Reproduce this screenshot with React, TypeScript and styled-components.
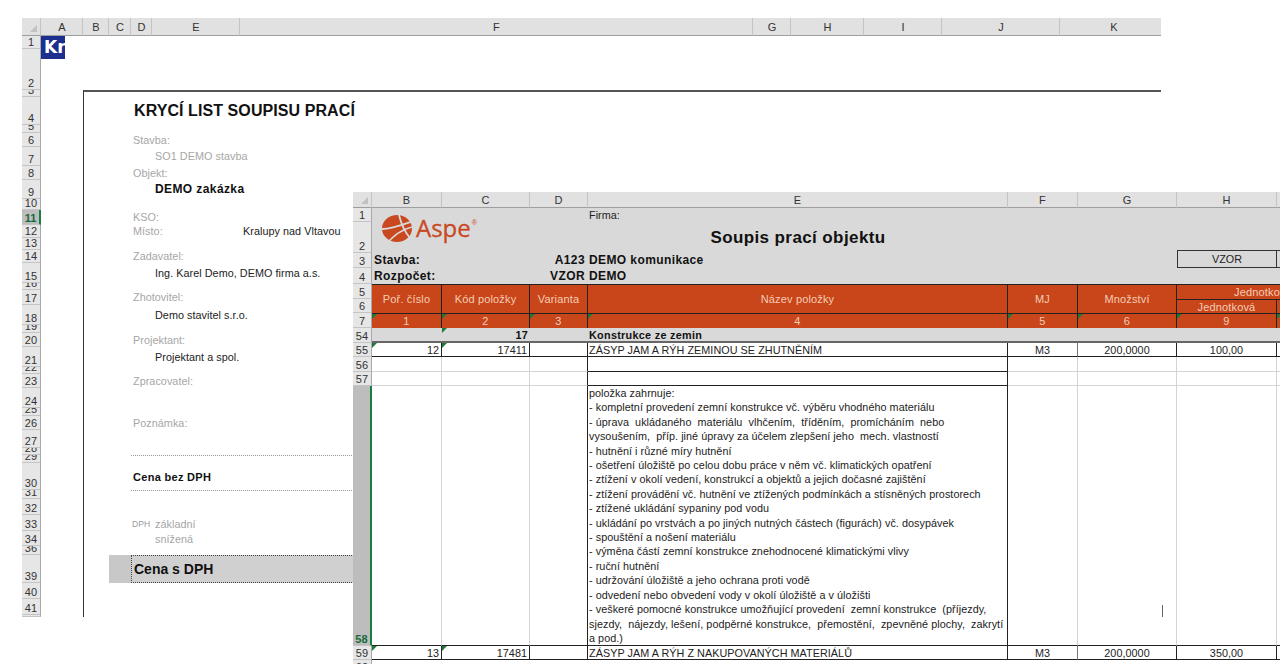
import React from 'react';
import styled, { createGlobalStyle, css } from 'styled-components';

const GlobalStyle = createGlobalStyle`
  html, body {
    margin: 0;
    padding: 0;
    height: 664px;
    overflow: hidden;
    background: #fff;
  }
  body {
    font-family: "Liberation Sans", Arial, sans-serif;
    font-size: 10.8px;
    letter-spacing: 0.05px;
  }
`;

interface Place {
  $col: number | string;
  $row: number | string;
}

const placed = css<Place>`
  grid-column: ${(p) => p.$col};
  grid-row: ${(p) => p.$row};
`;

const BLACK = '#222';
const GRID = '#d4d4d4';

/* ---------- shared sheet chrome ---------- */

const ColHead = styled.div<{ $col: number }>`
  grid-column: ${(p) => p.$col};
  grid-row: 1;
  box-sizing: border-box;
  display: flex;
  align-items: center;
  justify-content: center;
  padding-left: 1px;
  background: #e1e1e1;
  border-right: 1px solid #c4c4c4;
  border-bottom: 1px solid #9e9e9e;
  color: #333;
  font-size: 11px;
`;

const FrontColHead = styled(ColHead)`
  padding-left: 0;
`;

const Corner = styled.div`
  grid-column: 1;
  grid-row: 1;
  box-sizing: border-box;
  position: relative;
  background: #e1e1e1;
  border-bottom: 1px solid #9e9e9e;
  border-right: 1px solid #c4c4c4;

  &::after {
    content: '';
    position: absolute;
    right: 3px;
    bottom: 3px;
    border-left: 7px solid transparent;
    border-bottom: 7px solid #c2c2c2;
  }
`;

const RowHead = styled.div<{ $row: number; $active?: boolean }>`
  grid-column: 1;
  grid-row: ${(p) => p.$row};
  box-sizing: border-box;
  overflow: hidden;
  display: flex;
  align-items: flex-end;
  justify-content: center;
  font-size: 11px;
  line-height: 11px;
  color: #333;
  background: #e6e6e6;
  border-bottom: 1px solid #c4c4c4;
  border-right: 1px solid #a8a8a8;
  ${(p) =>
    p.$active &&
    css`
      background: #bdbdbd;
      color: #17693a;
      font-weight: bold;
      border-right: 2px solid #17803f;
    `}
`;

const Flagged = css<{ $flag?: boolean }>`
  position: relative;
  ${(p) =>
    p.$flag &&
    css`
      &::before {
        content: '';
        position: absolute;
        left: 0;
        top: 0;
        border-top: 5px solid #1d7a38;
        border-right: 5px solid transparent;
      }
    `}
`;

const Desk = styled.div`
  position: relative;
  width: 1280px;
  height: 664px;
  overflow: hidden;
`;

/* ---------- back sheet ---------- */

const BACK_COLS = [42, 26, 22, 21, 88, 513, 38, 73, 78, 118, 108];
const BACK_ROWS: [string, number][] = [
  ['1', 13], ['2', 41], ['3', 7], ['4', 28], ['5', 8], ['6', 14], ['7', 19], ['8', 14],
  ['9', 19], ['10', 11], ['11', 15], ['12', 13], ['13', 12], ['14', 13], ['15', 20], ['16', 7],
  ['17', 15], ['18', 20], ['19', 8], ['20', 14], ['21', 20], ['22', 7], ['23', 14], ['24', 20],
  ['25', 8], ['26', 14], ['27', 18], ['28', 7], ['29', 8], ['30', 27], ['31', 9], ['32', 16],
  ['33', 16], ['34', 15], ['36', 9], ['39', 28], ['40', 16], ['41', 16], ['', 2],
];

const BackSheet = styled.section`
  position: absolute;
  left: 22px;
  top: 18px;
  width: 1139px;
  height: 599px;
  overflow: hidden;
  display: grid;
  grid-template-columns: 19px ${BACK_COLS.map((w) => `${w}px`).join(' ')};
  grid-template-rows: 18px ${BACK_ROWS.map(([, h]) => `${h}px`).join(' ')};
  background: #fff;
`;

const Frame = styled.div`
  grid-column: 3 / -1;
  grid-row: 4 / -1;
  border-top: 2px solid #555;
  border-left: 1px solid #333;
`;

const KrLogo = styled.div`
  grid-column: 2;
  grid-row: 2 / 4;
  width: 24px;
  height: 23px;
  overflow: hidden;
  box-sizing: border-box;
  padding-left: 3px;
  background: #1c2f8e;
  color: #fff;
  font-family: "DejaVu Sans", sans-serif;
  font-weight: bold;
  font-size: 17px;
  line-height: 23px;
  letter-spacing: 0;
  white-space: nowrap;
`;

const SheetTitle = styled.h1`
  grid-column: 5 / -1;
  grid-row: 5;
  margin: 0;
  padding-left: 3px;
  align-self: center;
  font-size: 16px;
  font-weight: bold;
  letter-spacing: 0.08px;
  color: #111;
  white-space: nowrap;
`;

const FieldLabel = styled.div<{ $row: number; $low?: boolean }>`
  grid-column: 5 / -1;
  grid-row: ${(p) => p.$row};
  padding-left: 2px;
  align-self: ${(p) => (p.$low ? 'end' : 'center')};
  color: #a6a6a6;
  white-space: nowrap;
  line-height: 13px;
`;

const SmallLabel = styled(FieldLabel)`
  grid-column: 5;
  padding-left: 1px;
  font-size: 8.5px;
  color: #999;
`;

const FieldValue = styled.div<Place & { $muted?: boolean; $strong?: boolean; $low?: boolean }>`
  ${placed}
  padding-left: 3px;
  align-self: ${(p) => (p.$low ? 'end' : 'center')};
  white-space: nowrap;
  line-height: 13px;
  color: ${(p) => (p.$muted ? '#a6a6a6' : BLACK)};
  ${(p) =>
    p.$strong &&
    css`
      font-size: 12px;
      font-weight: bold;
      letter-spacing: 0.4px;
      color: #111;
    `}
`;

const DottedRule = styled.div<{ $row: number }>`
  grid-column: 5 / -1;
  grid-row: ${(p) => p.$row};
  border-top: 1px dotted #999;
`;

const NetPrice = styled.div`
  grid-column: 5 / -1;
  grid-row: 31;
  padding-left: 2px;
  align-self: end;
  margin-bottom: 6px;
  font-size: 11px;
  font-weight: bold;
  letter-spacing: 0.3px;
  color: #111;
  line-height: 13px;
`;

const GrossMargin = styled.div`
  grid-column: 4;
  grid-row: 37;
  background: #c8c8c8;
`;

const GrossBand = styled.div`
  grid-column: 5 / -1;
  grid-row: 37;
  box-sizing: border-box;
  display: flex;
  align-items: center;
  padding-left: 2px;
  background: #d0d0d0;
  border: 1px dotted #444;
  font-size: 14px;
  font-weight: bold;
  letter-spacing: 0;
  color: #111;
`;

/* ---------- front sheet ---------- */

const FRONT_ROWS = [16, 14, 31, 15, 16, 15, 14, 15, 15, 14, 15, 14, 260, 14, 14];
const FRONT_LABELS = ['1', '2', '3', '4', '5', '6', '7', '54', '55', '56', '57', '58', '59', '60'];

const FrontSheet = styled.section`
  position: absolute;
  left: 353px;
  top: 192px;
  width: 1024px;
  height: 472px;
  overflow: hidden;
  display: grid;
  grid-template-columns: 19px 70px 88px 58px 420px 70px 99px 100px 100px;
  grid-template-rows: ${FRONT_ROWS.map((h) => `${h}px`).join(' ')};
  background: #fff;
  color: ${BLACK};
`;

const GreyBand = styled.div`
  grid-column: 2 / -1;
  grid-row: 2 / 6;
  background: #d9d9d9;
`;

const LogoBox = styled.div`
  grid-column: 2 / 5;
  grid-row: 2 / 4;
  display: flex;
  align-items: center;
  gap: 4px;
  padding: 0 0 5px 10px;
  color: #c9481f;
`;

const LogoWord = styled.span`
  font-family: "Open Sans", "Liberation Sans", sans-serif;
  font-size: 24px;
  line-height: 28px;
  letter-spacing: 0;
  -webkit-text-stroke: 0.3px #c9481f;
`;

const LogoMark = styled.sup`
  font-size: 7px;
  line-height: 1;
  align-self: flex-start;
  margin: 11px 0 0 -3px;
`;

const Firm = styled.div`
  grid-column: 5;
  grid-row: 2;
  padding-left: 1px;
  line-height: 14px;
`;

const FrontTitle = styled.h2`
  grid-column: 5;
  grid-row: 3;
  margin: 0;
  align-self: end;
  padding-bottom: 5px;
  text-align: center;
  font-size: 17px;
  line-height: 20px;
  font-weight: bold;
  letter-spacing: 0.4px;
  color: #111;
  white-space: nowrap;
`;

const InfoText = styled.div<Place & { $end?: boolean }>`
  ${placed}
  padding: 0 ${(p) => (p.$end ? 3 : 2)}px 0 ${(p) => (p.$col === 5 ? 1 : 2)}px;
  margin-top: ${(p) => (p.$row === 4 ? -2 : 0)}px;
  align-self: center;
  font-size: 12px;
  font-weight: bold;
  line-height: 14px;
  letter-spacing: 0.4px;
  color: #111;
  white-space: nowrap;
  text-align: ${(p) => (p.$end ? 'right' : 'left')};
`;

const StampBox = styled.div<{ $col: number }>`
  grid-column: ${(p) => p.$col};
  grid-row: 4;
  box-sizing: border-box;
  display: flex;
  align-items: center;
  justify-content: center;
  height: 18px;
  margin-top: -3px;
  border: 1px solid #333;
  border-left-width: ${(p) => (p.$col === 8 ? 1 : 0)}px;
`;

const TableHead = styled.div<Place & { $flag?: boolean }>`
  ${placed}
  ${Flagged}
  box-sizing: border-box;
  display: flex;
  align-items: center;
  justify-content: center;
  white-space: nowrap;
  background: #c9451a;
  color: #f3cdb5;
  border-top: 1px solid ${BLACK};
  border-right: 1px solid ${BLACK};
  letter-spacing: 0.15px;
  font-size: 11px;
`;

const SectionRow = styled.div`
  grid-column: 2 / -1;
  grid-row: 9;
  box-sizing: border-box;
  background: #d9d9d9;
  border-bottom: 2px solid #666;
`;

const SectionCell = styled.div<{ $col: number; $flag?: boolean; $end?: boolean }>`
  grid-column: ${(p) => p.$col};
  grid-row: 9;
  ${Flagged}
  padding: 0 2px 0 ${(p) => (p.$col === 5 ? 1 : 2)}px;
  font-weight: bold;
  line-height: 14px;
  letter-spacing: 0.3px;
  color: #111;
  white-space: nowrap;
  text-align: ${(p) => (p.$end ? 'right' : 'left')};
`;

const ItemCell = styled.div<Place & { $flag?: boolean; $align?: string; $right?: string }>`
  ${placed}
  ${Flagged}
  box-sizing: border-box;
  padding: 0 2px 0 ${(p) => (p.$col === 5 ? 1 : 2)}px;
  line-height: 14px;
  white-space: nowrap;
  overflow: hidden;
  text-align: ${(p) => p.$align || 'left'};
  border-right: 1px solid ${(p) => p.$right || BLACK};
  border-bottom: 1px solid ${BLACK};
`;

const BlankCell = styled.div<Place & { $right?: string; $bottom?: string }>`
  ${placed}
  box-sizing: border-box;
  border-right: 1px solid ${(p) => p.$right || GRID};
  border-bottom: 1px solid ${(p) => p.$bottom || GRID};
`;

const NoteCell = styled.div`
  grid-column: 5;
  grid-row: 13;
  box-sizing: border-box;
  padding: 0 1px;
  line-height: 14.4px;
  white-space: pre;
  overflow: hidden;
  border-right: 1px solid ${BLACK};
  border-bottom: 1px solid ${BLACK};
`;

const NoteLine = styled.div``;

const Caret = styled.div`
  position: absolute;
  left: 1162px;
  top: 605px;
  width: 1px;
  height: 12px;
  background: #666;
`;

const NOTES = [
  'položka zahrnuje:',
  '- kompletní provedení zemní konstrukce vč. výběru vhodného materiálu',
  '- úprava  ukládaného  materiálu  vlhčením,  tříděním,  promícháním  nebo',
  'vysoušením,  příp. jiné úpravy za účelem zlepšení jeho  mech. vlastností',
  '- hutnění i různé míry hutnění',
  '- ošetření úložiště po celou dobu práce v něm vč. klimatických opatření',
  '- ztížení v okolí vedení, konstrukcí a objektů a jejich dočasné zajištění',
  '- ztížení provádění vč. hutnění ve ztížených podmínkách a stísněných prostorech',
  '- ztížené ukládání sypaniny pod vodu',
  '- ukládání po vrstvách a po jiných nutných částech (figurách) vč. dosypávek',
  '- spouštění a nošení materiálu',
  '- výměna částí zemní konstrukce znehodnocené klimatickými vlivy',
  '- ruční hutnění',
  '- udržování úložiště a jeho ochrana proti vodě',
  '- odvedení nebo obvedení vody v okolí úložiště a v úložišti',
  '- veškeré pomocné konstrukce umožňující provedení  zemní konstrukce  (příjezdy,',
  'sjezdy,  nájezdy, lešení, podpěrné konstrukce,  přemostění,  zpevněné plochy,  zakrytí',
  'a pod.)',
];

const AspeGlobe = () => (
  <svg width="30" height="27" viewBox="0 0 30 27">
    <ellipse cx="15" cy="13.5" rx="15" ry="13.5" fill="#c9481f" />
    <path d="M0 14 C10 14 20 10 30 6.5" fill="none" stroke="#d9d9d9" strokeWidth="1.8" />
    <path d="M17 0 C19 8 22 16 28 23" fill="none" stroke="#d9d9d9" strokeWidth="1.8" />
    <path d="M6 27 C12 21 18 15 30 12" fill="none" stroke="#d9d9d9" strokeWidth="1.5" />
  </svg>
);

const BACK_HEADS = ['A', 'B', 'C', 'D', 'E', 'F', 'G', 'H', 'I', 'J', 'K'];
const FRONT_HEADS = ['B', 'C', 'D', 'E', 'F', 'G', 'H', ''];
const FRONT_NUMBERS: [number, string][] = [[2, '1'], [3, '2'], [4, '3'], [5, '4'], [6, '5'], [7, '6'], [8, '9'], [9, '']];

const ItemRow: React.FC<{
  row: number;
  order: string;
  code: string;
  name: string;
  price: string;
}> = ({ row, order, code, name, price }) => (
  <>
    <ItemCell $col={2} $row={row} $flag $align="right">{order}</ItemCell>
    <ItemCell $col={3} $row={row} $flag $align="right">{code}</ItemCell>
    <ItemCell $col={4} $row={row} />
    <ItemCell $col={5} $row={row}>{name}</ItemCell>
    <ItemCell $col={6} $row={row} $align="center" $right="#777">M3</ItemCell>
    <ItemCell $col={7} $row={row} $align="center">200,0000</ItemCell>
    <ItemCell $col={8} $row={row} $align="center">{price}</ItemCell>
    <ItemCell $col={9} $row={row} />
  </>
);

const GapRow: React.FC<{ row: number }> = ({ row }) => (
  <>
    <BlankCell $col={2} $row={row} />
    <BlankCell $col={3} $row={row} />
    <BlankCell $col={4} $row={row} $right={BLACK} />
    <BlankCell $col={5} $row={row} $right={BLACK} $bottom={BLACK} />
    <BlankCell $col={6} $row={row} />
    <BlankCell $col={7} $row={row} />
    <BlankCell $col={8} $row={row} />
    <BlankCell $col={9} $row={row} />
  </>
);

export default function App() {
  return (
    <Desk>
      <GlobalStyle />

      <BackSheet>
        <Corner />
        {BACK_HEADS.map((h, i) => (
          <ColHead key={h} $col={i + 2}>{h}</ColHead>
        ))}
        {BACK_ROWS.map(([label], i) => (
          <RowHead key={i} $row={i + 2} $active={label === '11'}>{label}</RowHead>
        ))}

        <Frame />
        <KrLogo>Kr</KrLogo>
        <SheetTitle>KRYCÍ LIST SOUPISU PRACÍ</SheetTitle>

        <FieldLabel $row={7}>Stavba:</FieldLabel>
        <FieldValue $col="6 / -1" $row={8} $muted>SO1 DEMO stavba</FieldValue>
        <FieldLabel $row={9}>Objekt:</FieldLabel>
        <FieldValue $col="6 / -1" $row={10} $strong>DEMO zakázka</FieldValue>
        <FieldLabel $row={12}>KSO:</FieldLabel>
        <FieldLabel $row={13}>Místo:</FieldLabel>
        <FieldValue $col="7 / -1" $row={13}>Kralupy nad Vltavou</FieldValue>
        <FieldLabel $row={15}>Zadavatel:</FieldLabel>
        <FieldValue $col="6 / -1" $row={16}>Ing. Karel Demo, DEMO firma a.s.</FieldValue>
        <FieldLabel $row={18}>Zhotovitel:</FieldLabel>
        <FieldValue $col="6 / -1" $row={19}>Demo stavitel s.r.o.</FieldValue>
        <FieldLabel $row={21}>Projektant:</FieldLabel>
        <FieldValue $col="6 / -1" $row={22}>Projektant a spol.</FieldValue>
        <FieldLabel $row={24}>Zpracovatel:</FieldLabel>
        <FieldLabel $row={27}>Poznámka:</FieldLabel>

        <DottedRule $row={30} />
        <NetPrice>Cena bez DPH</NetPrice>
        <DottedRule $row={32} />

        <SmallLabel $row={34} $low>DPH</SmallLabel>
        <FieldValue $col="6 / -1" $row={34} $muted $low>základní</FieldValue>
        <FieldValue $col="6 / -1" $row={35} $muted $low>snížená</FieldValue>

        <GrossMargin />
        <GrossBand>Cena s DPH</GrossBand>
      </BackSheet>

      <FrontSheet>
        <Corner />
        {FRONT_HEADS.map((h, i) => (
          <FrontColHead key={i} $col={i + 2}>{h}</FrontColHead>
        ))}
        {FRONT_LABELS.map((label, i) => (
          <RowHead key={label} $row={i + 2} $active={label === '58'}>{label}</RowHead>
        ))}

        <GreyBand />
        <LogoBox>
          <AspeGlobe />
          <LogoWord>Aspe</LogoWord>
          <LogoMark>®</LogoMark>
        </LogoBox>
        <Firm>Firma:</Firm>
        <FrontTitle>Soupis prací objektu</FrontTitle>

        <InfoText $col="2 / 4" $row={4}>Stavba:</InfoText>
        <InfoText $col="3 / 5" $row={4} $end>A123</InfoText>
        <InfoText $col={5} $row={4}>DEMO komunikace</InfoText>
        <InfoText $col="2 / 4" $row={5}>Rozpočet:</InfoText>
        <InfoText $col="3 / 5" $row={5} $end>VZOR</InfoText>
        <InfoText $col={5} $row={5}>DEMO</InfoText>
        <StampBox $col={8}>VZOR</StampBox>
        <StampBox $col={9} />

        <TableHead $col={2} $row="6 / 8">Poř. číslo</TableHead>
        <TableHead $col={3} $row="6 / 8">Kód položky</TableHead>
        <TableHead $col={4} $row="6 / 8">Varianta</TableHead>
        <TableHead $col={5} $row="6 / 8">Název položky</TableHead>
        <TableHead $col={6} $row="6 / 8">MJ</TableHead>
        <TableHead $col={7} $row="6 / 8">Množství</TableHead>
        <TableHead $col="8 / 10" $row={6}>Jednotkové ceny</TableHead>
        <TableHead $col={8} $row={7}>Jednotková</TableHead>
        <TableHead $col={9} $row={7} />
        {FRONT_NUMBERS.map(([col, text]) => (
          <TableHead key={col} $col={col} $row={8} $flag>{text}</TableHead>
        ))}

        <SectionRow />
        <SectionCell $col={3} $flag $end>17</SectionCell>
        <SectionCell $col={5}>Konstrukce ze zemin</SectionCell>

        <ItemRow row={10} order="12" code="17411" name="ZÁSYP JAM A RÝH ZEMINOU SE ZHUTNĚNÍM" price="100,00" />
        <GapRow row={11} />
        <GapRow row={12} />

        <BlankCell $col={2} $row={13} $bottom={BLACK} />
        <BlankCell $col={3} $row={13} $bottom={BLACK} />
        <BlankCell $col={4} $row={13} $right={BLACK} $bottom={BLACK} />
        <NoteCell>
          {NOTES.map((note) => (
            <NoteLine key={note}>{note}</NoteLine>
          ))}
        </NoteCell>
        <BlankCell $col={6} $row={13} $bottom={BLACK} />
        <BlankCell $col={7} $row={13} $bottom={BLACK} />
        <BlankCell $col={8} $row={13} $bottom={BLACK} />
        <BlankCell $col={9} $row={13} $bottom={BLACK} />

        <ItemRow row={14} order="13" code="17481" name="ZÁSYP JAM A RÝH Z NAKUPOVANÝCH MATERIÁLŮ" price="350,00" />
        <BlankCell $col="2 / -1" $row={15} />
      </FrontSheet>

      <Caret />
    </Desk>
  );
}
